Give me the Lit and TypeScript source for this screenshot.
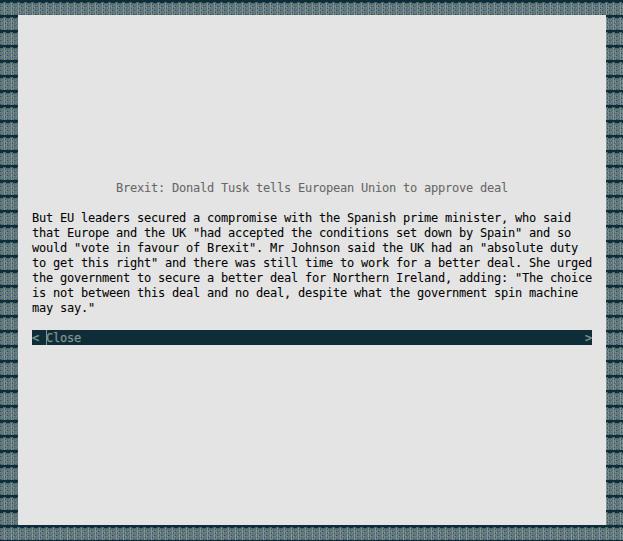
import { LitElement, html, svg, css } from "lit";
import { customElement } from "lit/decorators.js";

// One 7x15 shade cell of the terminal background.
const COLORS: Record<string, string> = {
  d: "#0f2d38", b: "#4b7896", g: "#82958f", o: "#847c5c", s: "#6a858f", n: "#2d4b66", t: "#4d6a70", m: "#5c6d6b",
};
const ROWS = [
  "ddddddd", "ddddddd", "dtttddd", "tmgmttt", "obgnsmb", "bmgosbo", "mogbsnm", "sbgmgob",
  "obgnsmb", "bmgosbo", "mogbsnm", "sbgmgob", "obgnsmb", "bmgosbo", "mtgtsnt",
];

@customElement("app-root")
export class AppRoot extends LitElement {
  static styles = css`
    :host { display: block; height: 541px; background: #0f2d38; position: relative; overflow: hidden; }
    .shade { position: absolute; inset: 0; width: 623px; height: 541px; display: block; }
    .screen { position: relative; box-sizing: border-box; width: 623px; height: 541px; padding: 15px 17px 16px 18px; }
    .dialog {
      box-sizing: border-box; height: 510px; padding: 166px 14px 0; background: #e4e4e4; color: #000;
      font: 12px/15px "DejaVu Sans Mono", monospace; letter-spacing: -0.2246px; white-space: pre;
      -webkit-text-stroke: 0.06px currentColor;
    }
    .title { color: #666; text-align: center; margin-bottom: 15px; }
    .body { margin-bottom: 14px; }
    .button { display: flex; justify-content: space-between; width: 560px; height: 15px; line-height: 17px; background: #0f2d38; color: #82958f; overflow: hidden; -webkit-text-stroke-width: 0.25px; }
    .label { position: relative; }
    .label::before { content: ""; position: absolute; left: 0; top: -3px; width: 1px; height: 20px; background: #82958f; }
  `;

  render() {
    return html`
      <svg class="shade" shape-rendering="crispEdges">
        <defs>
          <pattern id="cell" x="2" width="7" height="15" patternUnits="userSpaceOnUse">
            ${ROWS.flatMap((row, y) => [...row].map((c, x) =>
              svg`<rect x=${x} y=${y} width="1" height="1" fill=${COLORS[c]}></rect>`))}
          </pattern>
        </defs>
        <rect width="623" height="540" fill="url(#cell)"></rect>
      </svg>
      <div class="screen">
        <div class="dialog"><div class="title">Brexit: Donald Tusk tells European Union to approve deal</div><div class="body">But EU leaders secured a compromise with the Spanish prime minister, who said
that Europe and the UK "had accepted the conditions set down by Spain" and so
would "vote in favour of Brexit". Mr Johnson said the UK had an "absolute duty
to get this right" and there was still time to work for a better deal. She urged
the government to secure a better deal for Northern Ireland, adding: "The choice
is not between this deal and no deal, despite what the government spin machine
may say."</div><div class="button"><span>&lt; <span class="label">Close</span></span><span>&gt;</span></div></div>
      </div>`;
  }
}
